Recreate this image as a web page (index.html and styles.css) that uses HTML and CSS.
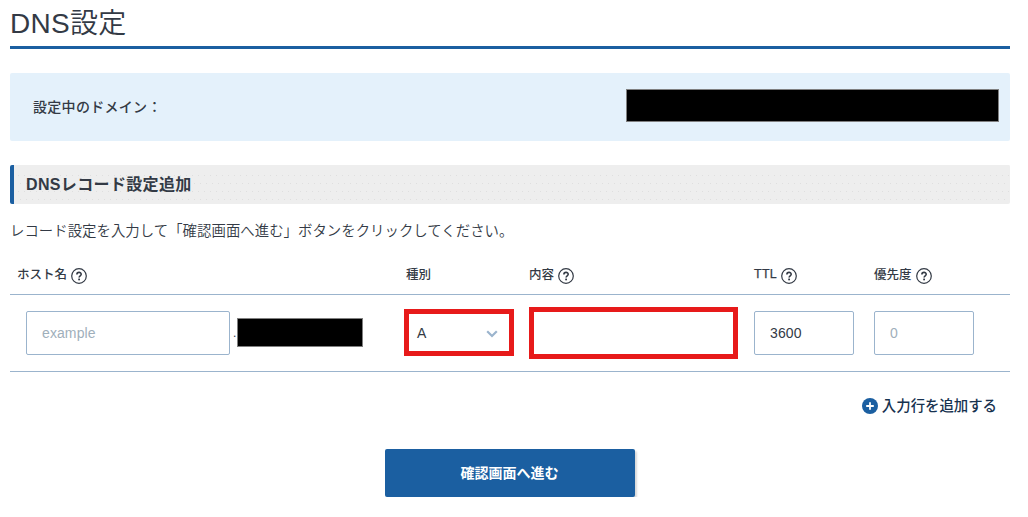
FILE: index.html
```html
<!DOCTYPE html>
<html lang="ja">
<head>
<meta charset="utf-8">
<title>DNS設定</title>
<link rel="stylesheet" href="styles.css">
</head>
<body>
<svg class="defs" aria-hidden="true">
  <symbol id="help" viewBox="0 0 16 16">
    <circle cx="8" cy="8" r="7.3" fill="none" stroke="currentColor" stroke-width="1.2"/>
    <path d="M5.9 6.4C5.9 3.7 10.2 3.7 10.2 6.3C10.2 7.8 8.1 7.9 8.1 9.6" fill="none" stroke="currentColor" stroke-width="1.6"/>
    <rect x="7.2" y="10.6" width="1.8" height="1.7" fill="currentColor"/>
  </symbol>
</svg>
<main class="page">
  <h1 class="title">DNS設定</h1>
  <section class="domain">
    <span class="domain-label">設定中のドメイン：</span>
    <span class="mask mask-domain"></span>
  </section>
  <h2 class="section-title">DNSレコード設定追加</h2>
  <p class="lead">レコード設定を入力して「確認画面へ進む」ボタンをクリックしてください。</p>
  <div class="grid head">
    <div class="cell">ホスト名<svg class="help"><use href="#help"/></svg></div>
    <div class="cell">種別</div>
    <div class="cell">内容<svg class="help"><use href="#help"/></svg></div>
    <div class="cell"><span class="ttl">TTL</span><svg class="help"><use href="#help"/></svg></div>
    <div class="cell">優先度<svg class="help"><use href="#help"/></svg></div>
  </div>
  <div class="grid row">
    <div class="host"><input class="field" placeholder="example"><span class="dot">.</span><span class="mask mask-host"></span></div>
    <div class="select">A<svg class="chevron" viewBox="0 0 12 8"><path d="M1.2 1.2L6 6L10.8 1.2" fill="none" stroke="#9bb4cd" stroke-width="2.2"/></svg></div>
    <input class="content">
    <input class="field short" value="3600">
    <input class="field short" placeholder="0">
  </div>
  <a class="add"><svg class="plus" viewBox="0 0 16 16"><circle cx="8" cy="8" r="8" fill="#1b5fa1"/><path d="M8 4.2V11.8M4.2 8H11.8" stroke="#fff" stroke-width="1.8"/></svg><span class="add-label">入力行を追加する</span></a>
  <button class="submit">確認画面へ進む</button>
</main>
</body>
</html>
```
FILE: styles.css
```css
* { box-sizing: border-box; }
body {
  margin: 0;
  background: #fff;
  color: #333a45;
  font-family: "Liberation Sans", "Noto Sans CJK JP", sans-serif;
}
.defs { position: absolute; width: 0; height: 0; }
.page {
  width: 1000px;
  margin-left: 10px;
  display: flex;
  flex-direction: column;
}
.title {
  height: 49px;
  margin: 0;
  border-bottom: 3px solid #1b5fa1;
  font-size: 28px;
  font-weight: 350;
  line-height: 47px;
  letter-spacing: 0.3px;
}
.domain {
  height: 68px;
  margin-top: 24px;
  padding: 0 11px 0 23px;
  display: flex;
  align-items: center;
  justify-content: space-between;
  border-radius: 2px;
  background: #e4f1fb;
  font-size: 14px;
  font-weight: 500;
}
.domain-label { margin-top: -3px; letter-spacing: 0.3px; }
.mask { background: #000; border: 1px solid #808080; }
.mask-domain { width: 373px; height: 33px; margin-top: -3px; }
.section-title {
  height: 39px;
  margin: 24px 0 0;
  padding-left: 12px;
  border-left: 4px solid #1b5fa1;
  border-radius: 2px;
  background-color: #eee;
  background-image:
    linear-gradient(#eee, #eee),
    linear-gradient(#eee, #eee),
    conic-gradient(from 270deg at 1px 1px, #dfdfdf 90deg, transparent 0),
    conic-gradient(from 270deg at 1px 1px, #dfdfdf 90deg, transparent 0);
  background-size: 100% 6px, 4px 100%, 6px 16px, 6px 16px;
  background-position: 0 0, 0 0, 4px 10px, 0 2px;
  background-repeat: no-repeat, no-repeat, repeat, repeat;
  font-size: 16px;
  font-weight: 700;
  line-height: 39px;
  letter-spacing: 0.35px;
}
.lead {
  height: 24px;
  margin: 15px 0 0;
  font-size: 14.4px;
  font-weight: 350;
  line-height: 24px;
  letter-spacing: 0.03px;
}
.grid {
  display: grid;
  grid-template-columns: 389px 123px 225px 120px 143px;
  border-bottom: 1px solid #9bb4cd;
}
.head {
  height: 52px;
  padding-top: 18px;
  font-size: 12.5px;
  font-weight: 500;
}
.cell { display: flex; align-items: center; height: 24px; padding-left: 7px; }
.ttl { margin-top: 2px; letter-spacing: 0.3px; -webkit-text-stroke: 0.25px currentColor; }
.help { width: 16px; height: 16px; margin: 5px 0 0 4px; }
.row { height: 77px; padding-left: 16px; grid-template-columns: 378px 126px 224px 120px 136px; align-items: center; }
.host { display: flex; align-items: center; }
.field, .content {
  height: 44px;
  padding: 0 15px;
  border: 1px solid #9bb4cd;
  border-radius: 2px;
  background: #fff;
  color: #333a45;
  font: 14px "Liberation Sans", sans-serif;
}
.field { width: 204px; letter-spacing: 0.1px; }
.field::placeholder { color: #9fafbb; opacity: 1; }
.short { width: 100px; }
.dot { width: 7px; padding-left: 3px; font-size: 12px; }
.mask-host { width: 126px; height: 29px; margin-top: -2px; }
.select {
  width: 110px;
  height: 47px;
  margin-top: -1px;
  padding: 0 11px 0 8px;
  display: flex;
  align-items: center;
  justify-content: space-between;
  border: 5px solid #e71a1a;
  font-size: 14px;
}
.chevron { width: 12px; height: 8px; margin-top: 2px; }
.content { width: 209px; height: 52px; margin-left: -1px; border: 5px solid #e71a1a; border-radius: 0; }
.add {
  align-self: flex-end;
  height: 24px;
  margin: 22px 13px 0 0;
  display: flex;
  align-items: center;
  gap: 4px;
  color: #17324f;
  font-size: 14.4px;
  font-weight: 500;
}
.add-label { margin-top: -3px; }
.plus { width: 16px; height: 16px; }
.submit {
  align-self: center;
  width: 250px;
  height: 48px;
  margin-top: 31px;
  padding: 0 1px 3px 0;
  border: 0;
  border-radius: 2px;
  background: #1b5fa1;
  box-shadow: 2px 2px 2px rgba(0, 0, 0, 0.15);
  color: #fff;
  font: 700 14px "Liberation Sans", "Noto Sans CJK JP", sans-serif;
}
```
